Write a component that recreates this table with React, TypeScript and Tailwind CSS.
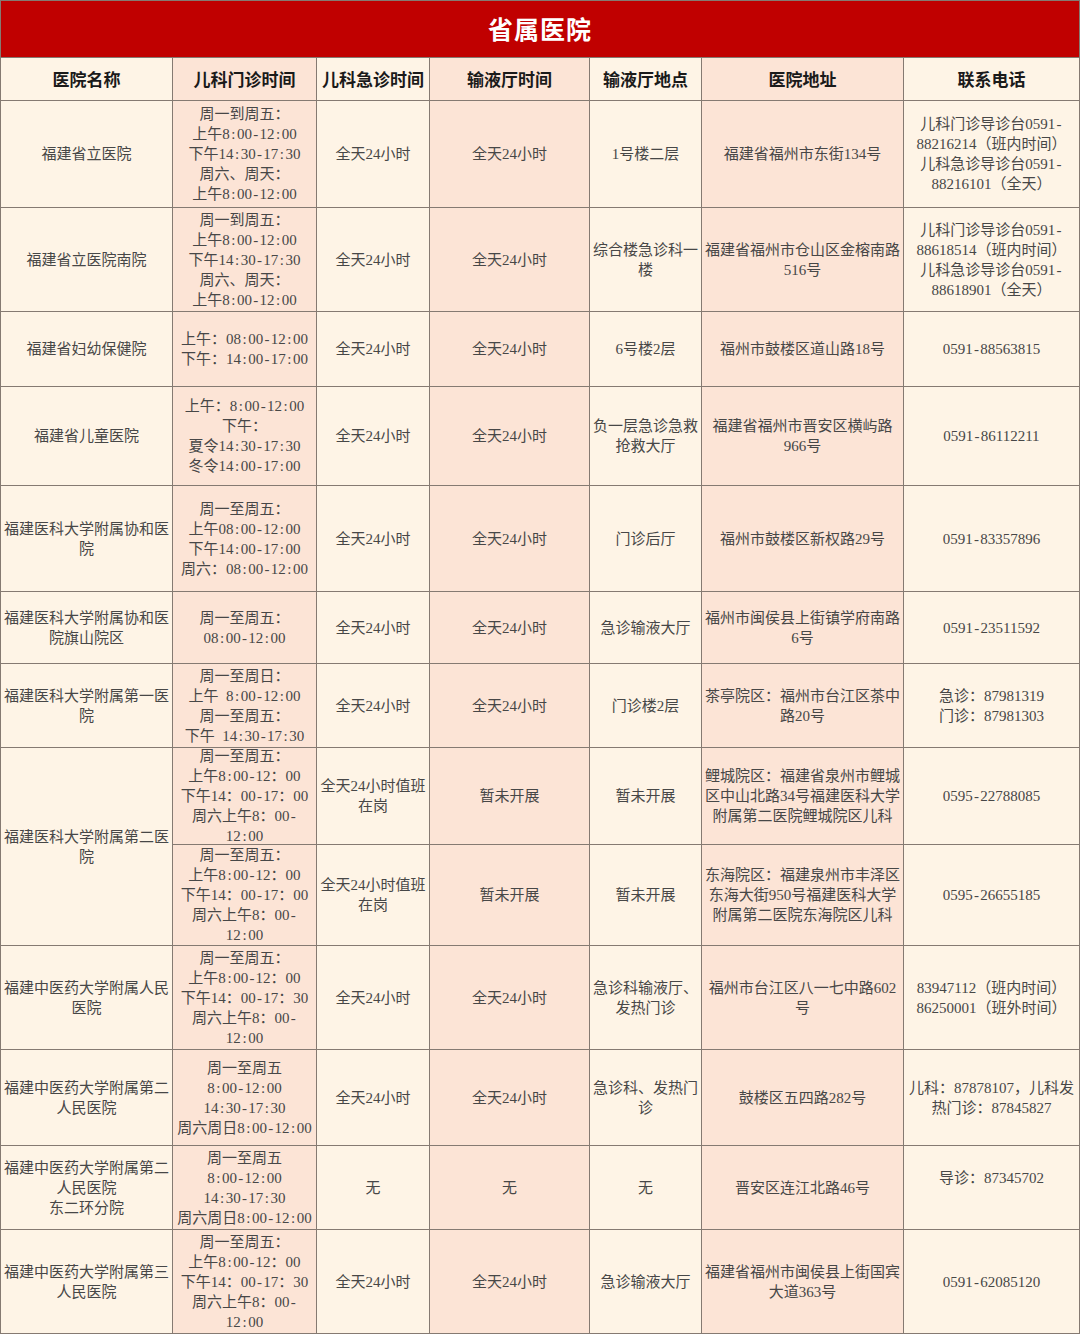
import React from "react"

const headers = [
  "医院名称",
  "儿科门诊时间",
  "儿科急诊时间",
  "输液厅时间",
  "输液厅地点",
  "医院地址",
  "联系电话",
]

const weekdayAmPm = "周一到周五：\n上午8:00-12:00\n下午14:30-17:30\n周六、周天：\n上午8:00-12:00"
const fyTwo = "周一至周五：\n上午8:00-12：00\n下午14：00-17：00\n周六上午8：00-\n12:00"
const tcmOne = "周一至周五：\n上午8:00-12：00\n下午14：00-17：30\n周六上午8：00-\n12:00"
const tcmTwo = "周一至周五\n8:00-12:00\n14:30-17:30\n周六周日8:00-12:00"
const allDay = "全天24小时"

type Row = { name?: string; span?: boolean; cells: string[] }

const rows: Row[] = [
  {
    name: "福建省立医院",
    cells: [
      weekdayAmPm,
      allDay,
      allDay,
      "1号楼二层",
      "福建省福州市东街134号",
      "儿科门诊导诊台0591-\n88216214（班内时间）\n儿科急诊导诊台0591-\n88216101（全天）",
    ],
  },
  {
    name: "福建省立医院南院",
    cells: [
      weekdayAmPm,
      allDay,
      allDay,
      "综合楼急诊科一\n楼",
      "福建省福州市仓山区金榕南路\n516号",
      "儿科门诊导诊台0591-\n88618514（班内时间）\n儿科急诊导诊台0591-\n88618901（全天）",
    ],
  },
  {
    name: "福建省妇幼保健院",
    cells: [
      "上午：08:00-12:00\n下午：14:00-17:00",
      allDay,
      allDay,
      "6号楼2层",
      "福州市鼓楼区道山路18号",
      "0591-88563815",
    ],
  },
  {
    name: "福建省儿童医院",
    cells: [
      "上午：8:00-12:00\n下午：\n夏令14:30-17:30\n冬令14:00-17:00",
      allDay,
      allDay,
      "负一层急诊急救\n抢救大厅",
      "福建省福州市晋安区横屿路\n966号",
      "0591-86112211",
    ],
  },
  {
    name: "福建医科大学附属协和医\n院",
    cells: [
      "周一至周五：\n上午08:00-12:00\n下午14:00-17:00\n周六：08:00-12:00",
      allDay,
      allDay,
      "门诊后厅",
      "福州市鼓楼区新权路29号",
      "0591-83357896",
    ],
  },
  {
    name: "福建医科大学附属协和医\n院旗山院区",
    cells: [
      "周一至周五：\n08:00-12:00",
      allDay,
      allDay,
      "急诊输液大厅",
      "福州市闽侯县上街镇学府南路\n6号",
      "0591-23511592",
    ],
  },
  {
    name: "福建医科大学附属第一医\n院",
    cells: [
      "周一至周日：\n上午  8:00-12:00\n周一至周五：\n下午  14:30-17:30",
      allDay,
      allDay,
      "门诊楼2层",
      "茶亭院区：福州市台江区茶中\n路20号",
      "急诊：87981319\n门诊：87981303",
    ],
  },
  {
    name: "福建医科大学附属第二医\n院",
    span: true,
    cells: [
      fyTwo,
      "全天24小时值班\n在岗",
      "暂未开展",
      "暂未开展",
      "鲤城院区：福建省泉州市鲤城\n区中山北路34号福建医科大学\n附属第二医院鲤城院区儿科",
      "0595-22788085",
    ],
  },
  {
    cells: [
      fyTwo,
      "全天24小时值班\n在岗",
      "暂未开展",
      "暂未开展",
      "东海院区：福建泉州市丰泽区\n东海大街950号福建医科大学\n附属第二医院东海院区儿科",
      "0595-26655185",
    ],
  },
  {
    name: "福建中医药大学附属人民\n医院",
    cells: [
      tcmOne,
      allDay,
      allDay,
      "急诊科输液厅、\n发热门诊",
      "福州市台江区八一七中路602\n号",
      "83947112（班内时间）\n86250001（班外时间）",
    ],
  },
  {
    name: "福建中医药大学附属第二\n人民医院",
    cells: [
      tcmTwo,
      allDay,
      allDay,
      "急诊科、发热门\n诊",
      "鼓楼区五四路282号",
      "儿科：87878107，儿科发\n热门诊：87845827",
    ],
  },
  {
    name: "福建中医药大学附属第二\n人民医院\n东二环分院",
    cells: [tcmTwo, "无", "无", "无", "晋安区连江北路46号", "导诊：87345702\n\u00a0"],
  },
  {
    name: "福建中医药大学附属第三\n人民医院",
    cells: [
      tcmOne,
      allDay,
      allDay,
      "急诊输液大厅",
      "福建省福州市闽侯县上街国宾\n大道363号",
      "0591-62085120",
    ],
  },
]

// odd columns cream, even columns peach
const colBg = (i: number) => (i % 2 === 0 ? "bg-[#fef4e6]" : "bg-[#fce4d6]")

// pad half-width ":" and "-" so times take the same width as the original half-width font
function renderLine(line: string) {
  return line.split(/([:\-])/).map((part, i) => {
    if (part === ":") return <span key={i} className="px-[1.6px]">:</span>
    if (part === "-") return <span key={i} className="px-[1.2px]">-</span>
    return part
  })
}

function Cell({ text, col, className = "" }: { text: string; col: number; className?: string }) {
  return (
    <div
      className={`${colBg(col)} flex flex-col items-center justify-center whitespace-pre text-center text-[15px] leading-[20px] text-[#474747] ${className}`}
    >
      {text.split("\n").map((line, i) => (
        <div key={i} className="h-[20px]">
          {renderLine(line)}
        </div>
      ))}
    </div>
  )
}

export default function App() {
  return (
    <div
      className="grid h-[1334px] w-[1080px] grid-cols-[171px_143px_112px_159px_111px_201px_175px] grid-rows-[56px_42px_106px_103px_74px_98px_105px_71px_83px_96px_100px_103px_95px_83px_103px] gap-px border border-[#857a72] bg-[#857a72]"
      style={{ fontFamily: '"Liberation Serif", "Noto Sans CJK SC", serif' }}
    >
      <div
        className="col-span-7 flex items-center justify-center bg-[#c00000] pb-[1px] text-[25px] font-bold tracking-[1px] text-white"
        style={{ fontFamily: '"Noto Sans CJK SC", sans-serif' }}
      >
        省属医院
      </div>
      {headers.map((h, i) => (
        <div
          key={h}
          className={`${colBg(i)} flex items-center justify-center text-[17px] font-bold text-[#1a1a1a]`}
          style={{ fontFamily: '"Noto Sans CJK SC", sans-serif' }}
        >
          {h}
        </div>
      ))}
      {rows.map((r, ri) => (
        <React.Fragment key={ri}>
          {r.name !== undefined && (
            <Cell text={r.name} col={0} className={r.span ? "row-span-2" : ""} />
          )}
          {r.cells.map((c, ci) => (
            <Cell key={ci} text={c} col={ci + 1} />
          ))}
        </React.Fragment>
      ))}
    </div>
  )
}
